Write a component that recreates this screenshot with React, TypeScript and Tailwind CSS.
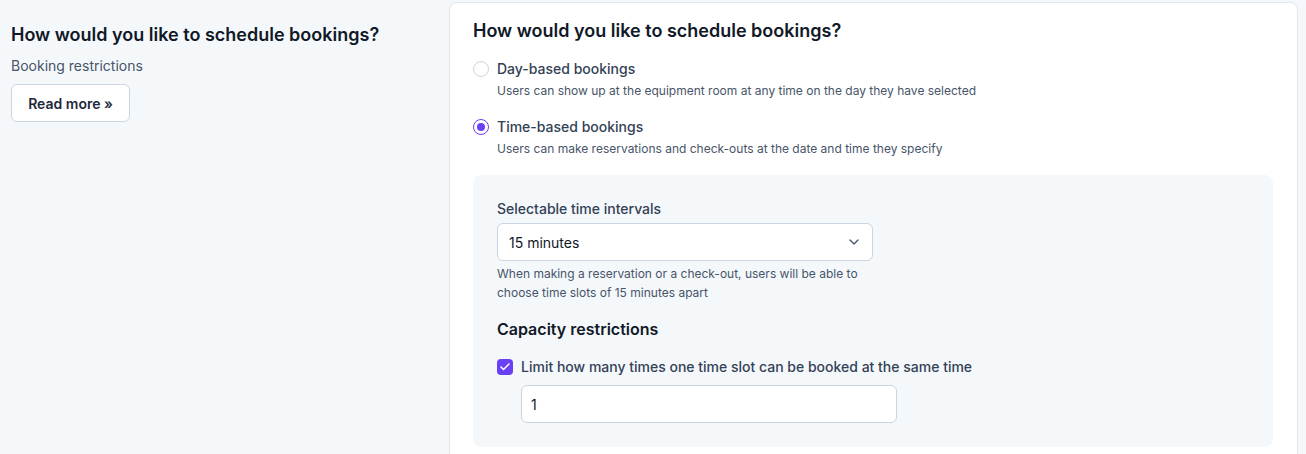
import { ChevronDown, Check } from 'lucide-react';

const options = [
  {
    id: 'day',
    label: 'Day-based bookings',
    hint: 'Users can show up at the equipment room at any time on the day they have selected',
    checked: false,
  },
  {
    id: 'time',
    label: 'Time-based bookings',
    hint: 'Users can make reservations and check-outs at the date and time they specify',
    checked: true,
  },
];

const Radio = ({ checked }: { checked: boolean }) =>
  checked ? (
    <span className="flex h-4 w-4 shrink-0 items-center justify-center rounded-full border border-[#6b3ff5] bg-white">
      <span className="h-2 w-2 rounded-full bg-[#6b3ff5]" />
    </span>
  ) : (
    <span className="h-4 w-4 shrink-0 rounded-full border border-[#cbd5e1] bg-white" />
  );

export default function App() {
  return (
    <div className="flex min-h-[454px] bg-[#f5f8fb] font-['Inter',sans-serif] text-[#111827]">
      {/* left: section intro */}
      <div className="w-[449px] shrink-0 pl-[11px] pt-[21px]">
        <h2 className="text-[18px] font-semibold leading-[28px]">How would you like to schedule bookings?</h2>
        <p className="mt-[7px] text-[14px] leading-[20px] text-[#475569]">Booking restrictions</p>
        <button className="mt-[8px] h-[38px] w-[119px] rounded-md border border-[#cbd5e1] bg-white text-[14px] font-semibold text-[#1e293b]">
          Read more »
        </button>
      </div>

      {/* right: settings card */}
      <div className="mr-[8px] mt-[2px] flex-1 rounded-t-lg border border-b-0 border-[#e2e8f0] bg-white px-[23px] pt-[14px]">
        <h2 className="text-[18px] font-semibold leading-[28px]">How would you like to schedule bookings?</h2>

        <div className="mt-[14px] flex flex-col gap-[18px]">
          {options.map((o) => (
            <div key={o.id}>
              <label className="flex items-center gap-2 text-[14px] font-medium leading-[20px] text-[#334155]">
                <Radio checked={o.checked} />
                {o.label}
              </label>
              <p className="mt-[4px] pl-6 text-[12px] leading-[16px] text-[#475569]">{o.hint}</p>
            </div>
          ))}
        </div>

        <div className="mt-[18px] w-[800px] rounded-lg bg-[#f5f8fb] px-6 pb-[24px] pt-6">
          <p className="text-[14px] font-medium leading-[20px] text-[#334155]">Selectable time intervals</p>
          <div className="mt-[4px] flex h-[38px] w-[376px] items-center justify-between rounded-md border border-[#cbd5e1] bg-white pl-[11px] pr-[10px] text-[14px] text-[#111827]">
            <span>15 minutes</span>
            <ChevronDown className="h-4 w-4 text-[#475569]" strokeWidth={2} />
          </div>
          <p className="mt-[3px] w-[380px] text-[12px] leading-[19px] text-[#475569]">
            When making a reservation or a check-out, users will be able to choose time slots of 15 minutes apart
          </p>

          <h3 className="mt-[15px] text-[16px] font-semibold leading-[24px]">Capacity restrictions</h3>

          <label className="mt-[16px] flex items-center gap-2 text-[14px] font-medium leading-[20px] text-[#334155]">
            <span className="flex h-4 w-4 shrink-0 items-center justify-center rounded-[4px] bg-[#6b3ff5]">
              <Check className="h-3 w-3 text-white" strokeWidth={3} />
            </span>
            Limit how many times one time slot can be booked at the same time
          </label>
          <div className="ml-6 mt-[8px] flex h-[38px] w-[376px] items-center rounded-md border border-[#cbd5e1] bg-white pl-[9px] text-[14px] text-[#111827]">
            1
          </div>
        </div>
      </div>
    </div>
  );
}
